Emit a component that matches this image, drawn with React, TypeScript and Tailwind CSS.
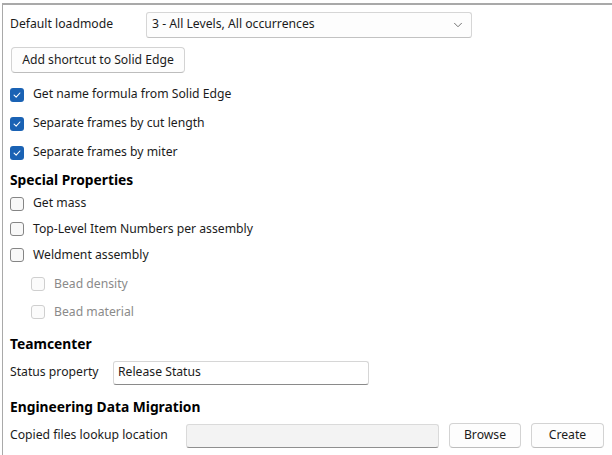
import { ChevronDown } from "lucide-react";

type CheckProps = { label: string; checked?: boolean; disabled?: boolean; indent?: boolean; h?: string };

function Check({ label, checked, disabled, indent, h = "h-[26px]" }: CheckProps) {
  return (
    <div className={`flex ${h} items-center gap-[9px] ${indent ? "pl-[21px]" : ""}`}>
      {checked ? (
        <span className="flex h-[14px] w-[14px] items-center justify-center rounded-[3px] bg-[#1a62b4]">
          <svg viewBox="0 0 12 12" className="h-[10px] w-[10px]">
            <path d="M2.5 6.2 5 8.5 9.5 3.6" fill="none" stroke="#fff" strokeWidth="1.3" strokeLinecap="round" strokeLinejoin="round" />
          </svg>
        </span>
      ) : (
        <span
          className={`h-[14px] w-[14px] rounded-[3px] border ${
            disabled ? "border-[#cfcfcf] bg-[#fbfbfb]" : "border-[#858585] bg-[#f8f8f8]"
          }`}
        />
      )}
      <span className={disabled ? "text-[#8a8a8a]" : "text-[#1b1b1b]"}>{label}</span>
    </div>
  );
}

function Heading({ children }: { children: string }) {
  return <div className="flex h-[22px] items-center text-[13.8px] font-bold text-[#000]">{children}</div>;
}

export default function App() {
  return (
    <div
      className="h-[455px] w-[612px] overflow-hidden bg-white pl-[2px] pt-[3px] text-[12.2px] text-[#1b1b1b]"
      style={{ fontFamily: '"Noto Sans", "Open Sans", sans-serif' }}
    >
      <div className="h-full border-l border-t-2 border-[#a9a9a9] pl-[7px] pr-2 pt-[6px]">
        <div className="flex h-[27px] items-center">
          <span className="w-[136px]">Default loadmode</span>
          <div className="flex h-[26px] w-[326px] items-center justify-between rounded-[3px] border border-[#d6d6d6] border-b-[#c2c2c2] bg-[#fdfdfd] pl-[5px] pr-[6px]">
            <span>3 - All Levels, All occurrences</span>
            <ChevronDown className="h-[14px] w-[14px] text-[#606060]" strokeWidth={1.5} />
          </div>
        </div>
        <div className="mt-[9px] flex">
          <button className="ml-[1px] flex h-[26px] w-[174px] items-center justify-center rounded-[4px] border border-[#d3d3d3] border-b-[#bdbdbd] bg-[#fdfdfd]">
            Add shortcut to Solid Edge
          </button>
        </div>
        <div className="mt-[7px] flex flex-col">
          <Check label="Get name formula from Solid Edge" checked h="h-[29px]" />
          <Check label="Separate frames by cut length" checked h="h-[29px]" />
          <Check label="Separate frames by miter" checked h="h-[29px]" />
        </div>
        <div className="mt-[2px]">
          <Heading>Special Properties</Heading>
        </div>
        <Check label="Get mass" h="h-[25px]" />
        <Check label="Top-Level Item Numbers per assembly" />
        <Check label="Weldment assembly" />
        <div className="mt-[2px]">
          <Check label="Bead density" disabled indent h="h-[28px]" />
          <Check label="Bead material" disabled indent h="h-[28px]" />
        </div>
        <div className="mt-[7px]">
          <Heading>Teamcenter</Heading>
        </div>
        <div className="mt-[4px] flex h-[27px] items-center">
          <span className="w-[103px]">Status property</span>
          <div className="flex h-[24px] w-[256px] items-center rounded-[3px] border border-[#d6d6d6] border-b-[#8a8a8a] bg-white pl-[4px]">
            Release Status
          </div>
        </div>
        <div className="mt-[10px]">
          <Heading>Engineering Data Migration</Heading>
        </div>
        <div className="mt-[4px] flex h-[27px] items-center">
          <span className="w-[176px]">Copied files lookup location</span>
          <div className="h-[24px] w-[253px] rounded-[3px] border border-[#dadada] border-b-[#8f8f8f] bg-[#f3f3f3]" />
          <button className="ml-[10px] flex h-[25px] w-[72px] items-center justify-center rounded-[4px] border border-[#d3d3d3] border-b-[#bdbdbd] bg-[#fdfdfd]">
            Browse
          </button>
          <button className="ml-[10px] flex h-[25px] w-[73px] items-center justify-center rounded-[4px] border border-[#d3d3d3] border-b-[#bdbdbd] bg-[#fdfdfd]">
            Create
          </button>
        </div>
      </div>
    </div>
  );
}
